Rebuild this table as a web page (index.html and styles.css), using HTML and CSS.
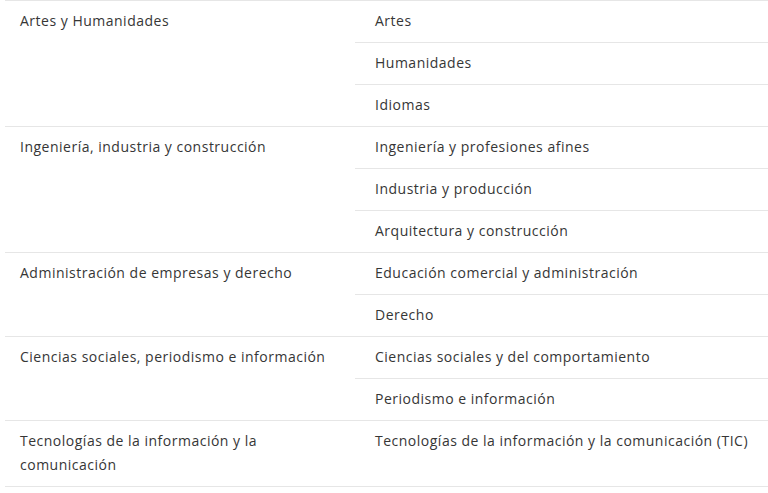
FILE: index.html
```html
<!DOCTYPE html>
<html lang="es">
<head>
<meta charset="utf-8">
<link rel="stylesheet" href="styles.css">
</head>
<body>
<table class="areas">
  <tbody>
    <tr>
      <td class="field" rowspan="3">Artes y Humanidades</td>
      <td class="sub">Artes</td>
    </tr>
    <tr><td class="sub">Humanidades</td></tr>
    <tr><td class="sub">Idiomas</td></tr>
    <tr>
      <td class="field" rowspan="3">Ingeniería, industria y construcción</td>
      <td class="sub">Ingeniería y profesiones afines</td>
    </tr>
    <tr><td class="sub">Industria y producción</td></tr>
    <tr><td class="sub">Arquitectura y construcción</td></tr>
    <tr>
      <td class="field" rowspan="2">Administración de empresas y derecho</td>
      <td class="sub">Educación comercial y administración</td>
    </tr>
    <tr><td class="sub">Derecho</td></tr>
    <tr>
      <td class="field" rowspan="2">Ciencias sociales, periodismo e información</td>
      <td class="sub">Ciencias sociales y del comportamiento</td>
    </tr>
    <tr><td class="sub">Periodismo e información</td></tr>
    <tr>
      <td class="field">Tecnologías de la información y la comunicación</td>
      <td class="sub">Tecnologías de la información y la comunicación (TIC)</td>
    </tr>
  </tbody>
</table>
</body>
</html>
```
FILE: styles.css
```css
html, body {
  margin: 0;
  padding: 0;
  background: #ffffff;
}
body {
  font-family: "Open Sans", "DejaVu Sans", sans-serif;
  font-size: 14px;
  letter-spacing: 0.5px;
  color: #363636;
}
.areas {
  border-collapse: collapse;
  table-layout: fixed;
  margin-left: 5px;
  width: 800px;
  border-top: 1px solid #e6e6e6;
}
.areas td {
  vertical-align: top;
  padding: 8px 15px 9px 20px;
  line-height: 24px;
  border-bottom: 1px solid #e6e6e6;
  text-align: left;
  white-space: nowrap;
}
.areas .field {
  width: 320px;
  padding-left: 15px;
  white-space: normal;
}
```
